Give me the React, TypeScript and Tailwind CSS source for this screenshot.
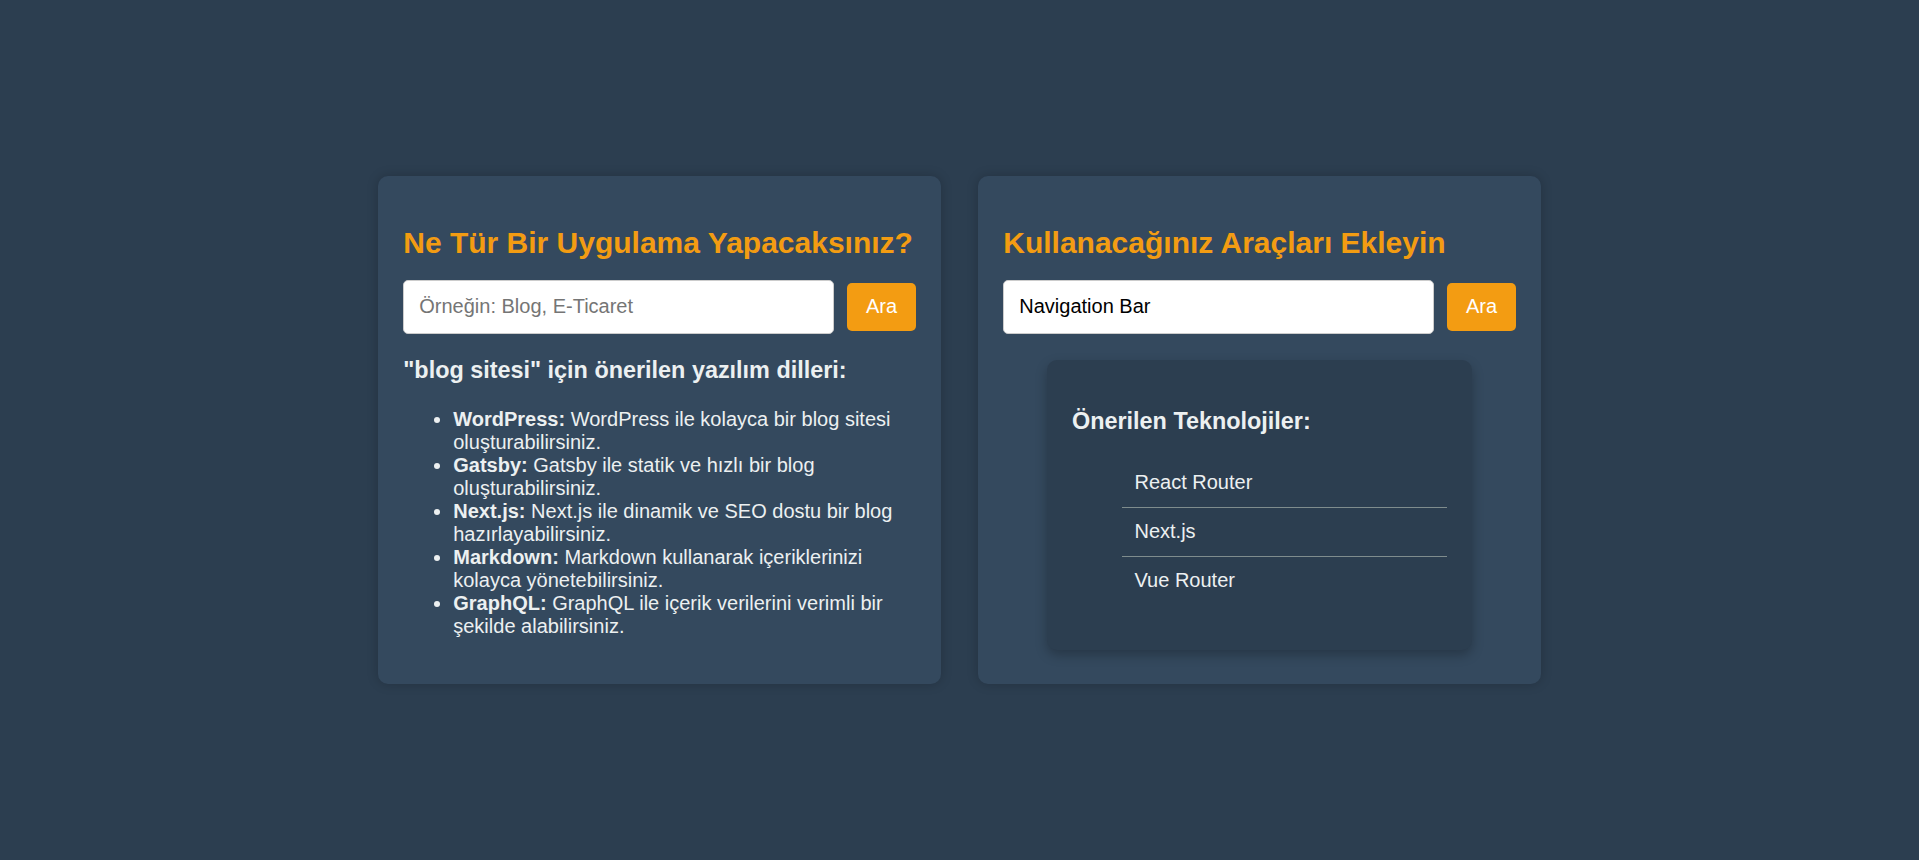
import React from "react";

const items: [string, string][] = [
  ["WordPress:", "WordPress ile kolayca bir blog sitesi oluşturabilirsiniz."],
  ["Gatsby:", "Gatsby ile statik ve hızlı bir blog oluşturabilirsiniz."],
  ["Next.js:", "Next.js ile dinamik ve SEO dostu bir blog hazırlayabilirsiniz."],
  ["Markdown:", "Markdown kullanarak içeriklerinizi kolayca yönetebilirsiniz."],
  ["GraphQL:", "GraphQL ile içerik verilerini verimli bir şekilde alabilirsiniz."],
];

const techs = ["React Router", "Next.js", "Vue Router"];

function SearchRow({ value, placeholder }: { value?: string; placeholder?: string }) {
  return (
    <div className="flex items-center gap-[13px]">
      <input
        className="flex-1 min-w-0 h-[54px] px-[15px] text-[20px] leading-[1.15] bg-white border border-[#cccccc] rounded-[5px] text-black placeholder:text-[#757575] outline-none"
        defaultValue={value}
        placeholder={placeholder}
      />
      <button className="bg-[#f39c12] text-white text-[20px] leading-[1.15] px-[18.75px] py-[12.5px] rounded-[5px]">
        Ara
      </button>
    </div>
  );
}

export default function App() {
  return (
    <div className="min-h-screen bg-[#2c3e50] flex items-center justify-center font-['Liberation_Sans',Arial,sans-serif]">
      <div className="flex gap-[37.5px] items-stretch">
        <div className="w-[562.5px] bg-[#34495e] rounded-[10px] p-[25px] shadow-[0_0_12px_rgba(0,0,0,0.2)]">
          <h2 className="text-[30px] font-bold text-[#f39c12] mt-[24.5px] mb-[19.5px] leading-[1.15]">
            Ne Tür Bir Uygulama Yapacaksınız?
          </h2>
          <SearchRow placeholder="Örneğin: Blog, E-Ticaret" />
          <h3 className="text-[23.4px] font-bold text-[#ecf0f1] mt-[23.4px] mb-[23.4px] leading-[1.15]">
            "blog sitesi" için önerilen yazılım dilleri:
          </h3>
          <ul className="list-disc pl-[50px] text-[20px] leading-[1.15] text-[#ecf0f1] mb-[21px]">
            {items.map(([b, t]) => (
              <li key={b}>
                <strong className="font-bold">{b}</strong> {t}
              </li>
            ))}
          </ul>
        </div>
        <div className="w-[562.5px] bg-[#34495e] rounded-[10px] p-[25px] shadow-[0_0_12px_rgba(0,0,0,0.2)]">
          <h2 className="text-[30px] font-bold text-[#f39c12] mt-[24.5px] mb-[19.5px] leading-[1.15]">
            Kullanacağınız Araçları Ekleyin
          </h2>
          <SearchRow value="Navigation Bar" />
          <div className="w-[425px] mx-auto mt-[26px] bg-[#2c3e50] rounded-[10px] p-[25px] shadow-[0_5px_12px_rgba(0,0,0,0.25)]">
            <h3 className="text-[23.4px] font-bold text-[#ecf0f1] mt-[23.4px] mb-[23.4px] leading-[1.15]">
              Önerilen Teknolojiler:
            </h3>
            <ul className="pl-[50px] mb-[20px] text-[20px] leading-[1.15] text-[#ecf0f1]">
              {techs.map((t) => (
                <li key={t} className="px-[12.5px] py-[12.5px] border-b-[1.25px] border-[#7f8c8d] last:border-b-0">
                  {t}
                </li>
              ))}
            </ul>
          </div>
        </div>
      </div>
    </div>
  );
}
